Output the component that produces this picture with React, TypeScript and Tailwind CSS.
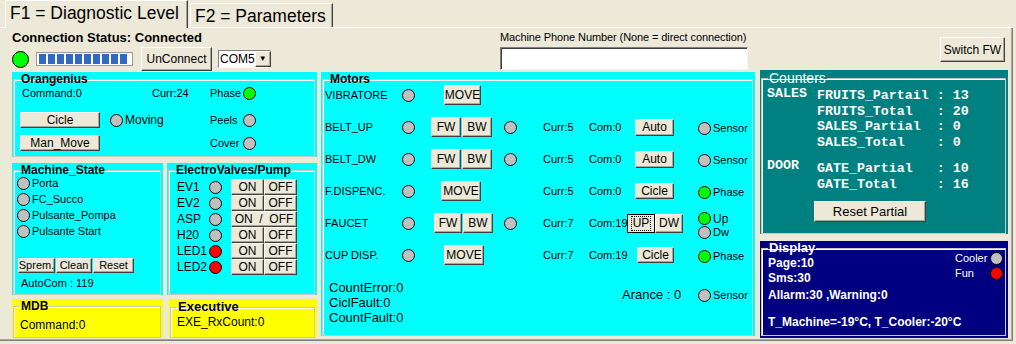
import type { ReactNode } from 'react';

type LedColor = 'gray' | 'green' | 'red';

const ledBg: Record<LedColor, string> = {
  gray: 'bg-[#c0c0c0]',
  green: 'bg-[#00ff00]',
  red: 'bg-[#ff0000]',
};

function Led({ color = 'gray', className = '' }: { color?: LedColor; className?: string }) {
  return (
    <span
      className={`block w-[13px] h-[13px] shrink-0 rounded-full border border-black ${ledBg[color]} ${className}`}
    />
  );
}

function Btn({ children, className = '' }: { children: ReactNode; className?: string }) {
  return (
    <button
      type="button"
      className={`flex items-center justify-center shrink-0 whitespace-nowrap bg-[#ece9d8] border border-t-white border-l-white border-r-[#404040] border-b-[#404040] shadow-[inset_-1px_-1px_0_#aca899] text-black leading-none ${className}`}
    >
      {children}
    </button>
  );
}

function Group({
  title,
  className = '',
  legendClass = '',
  boxClass = '',
  children,
}: {
  title: string;
  className?: string;
  legendClass?: string;
  boxClass?: string;
  children: ReactNode;
}) {
  return (
    <div className={className}>
      <fieldset
        className={`h-full ml-[1px] mr-[2px] border border-[#c8c8c0] shadow-[inset_1px_1px_0_#ffffff] ${boxClass}`}
      >
        <legend className={`ml-[6px] px-[1px] font-bold text-[12px] leading-[14px] ${legendClass}`}>
          {title}
        </legend>
        {children}
      </fieldset>
    </div>
  );
}

// riga motore: etichetta, led, pulsanti, led2, Curr, Com, pulsante, stato
function MotorRow({
  label,
  mid,
  led2 = false,
  curr,
  right,
}: {
  label: string;
  mid: ReactNode;
  led2?: boolean;
  curr?: string;
  right?: ReactNode;
}) {
  return (
    <div className="flex items-center h-[20px]">
      <span className="w-[77px] shrink-0">{label}</span>
      <Led />
      <div className="w-[89px] h-full flex shrink-0">{mid}</div>
      {led2 ? <Led /> : <span className="w-[13px] shrink-0" />}
      {curr && <span className="ml-[26px] w-[46px] shrink-0">{curr}</span>}
      {right}
    </div>
  );
}

function Status({ color = 'gray', text }: { color?: LedColor; text: string }) {
  return (
    <div className="flex items-center gap-[2px] mt-[3px]">
      <Led color={color} />
      <span>{text}</span>
    </div>
  );
}

export default function App() {
  const valves: [string, LedColor, boolean][] = [
    ['EV1', 'gray', false],
    ['EV2', 'gray', false],
    ['ASP', 'gray', true],
    ['H20', 'gray', false],
    ['LED1', 'red', false],
    ['LED2', 'red', false],
  ];

  const counters = [
    'FRUITS_Partail : 13',
    'FRUITS_Total   : 20',
    'SALES_Partial  : 0',
    'SALES_Total    : 0',
  ];

  return (
    <div className="w-[1016px] h-[344px] bg-[#ece9d8] text-black font-['Liberation_Sans',Arial,sans-serif] text-[11px] overflow-hidden">
      {/* Tabs */}
      <div className="h-[28px] flex items-end pl-[5px] border-b border-white w-[1013px]">
        <div className="relative z-10 w-[183px] h-[28px] mb-[-1px] bg-[#ece9d8] border-l border-t border-white border-r border-r-[#404040] shadow-[inset_-1px_0_0_#aca899] pl-[4px] text-[17.5px] leading-[24px] whitespace-nowrap">
          F1 = Diagnostic Level
        </div>
        <div className="w-[143px] h-[24px] ml-[2px] border-l border-t border-white border-r border-r-[#404040] shadow-[inset_-1px_0_0_#aca899] pl-[4px] text-[17.5px] leading-[24px] whitespace-nowrap">
          F2 = Parameters
        </div>
      </div>

      <div className="w-[1013px] h-[313px] border-r border-b border-[#808080] shadow-[inset_-1px_-1px_0_#aca899]">
        {/* Header */}
        <div className="h-[42px] flex pl-[12px]">
          <div className="w-[259px] shrink-0 pt-[3px]">
            <div className="text-[13px] font-bold leading-[14px]">Connection Status: Connected</div>
            <div className="flex items-center mt-[2px] h-[24px]">
              <span className="block w-[17px] h-[17px] rounded-full border border-black bg-[#00ff00]" />
              <div className="ml-[7px] w-[97px] h-[14px] border border-[#9a9a9a] bg-white flex gap-[2px] pl-[2px] py-[1px]">
                {Array.from({ length: 10 }).map((_, i) => (
                  <span key={i} className="block w-[7px] h-full bg-[#316ac5]" />
                ))}
              </div>
              <Btn className="ml-[8px] w-[71px] h-[24px] text-[12px]">UnConnect</Btn>
              <div className="ml-[6px] w-[53px] h-[18px] flex bg-white border border-t-[#808080] border-l-[#808080] border-r-white border-b-white">
                <span className="flex-1 text-[12px] leading-[16px] pl-[1px]">COM5</span>
                <Btn className="w-[16px] h-full text-[8px]">▼</Btn>
              </div>
            </div>
          </div>
          <div className="ml-[229px] w-[248px] shrink-0 pt-[2px]">
            <div className="leading-[14px] whitespace-nowrap tracking-[-0.1px]">
              Machine Phone Number (None = direct connection)
            </div>
            <div className="mt-[3px] h-[23px] bg-white border border-t-[#808080] border-l-[#808080] border-r-[#f4f4f4] border-b-[#f4f4f4] shadow-[inset_1px_1px_0_#404040]" />
          </div>
          <Btn className="ml-[192px] mt-[9px] w-[65px] h-[25px] text-[12px]">Switch FW</Btn>
        </div>

        {/* Panels */}
        <div className="flex pl-[12px]">
          {/* Left column */}
          <div className="w-[305px] mt-[2px] shrink-0">
            <Group title="Orangenius" className="h-[85px] bg-[#00ffff]">
              <div className="pl-[6px]">
                <div className="flex items-center h-[16px] mt-[-1px]">
                  <span className="w-[132px] pl-[2px]">Command:0</span>
                  <span className="w-[58px]">Curr:24</span>
                  <span className="w-[33px]">Phase</span>
                  <Led color="green" />
                </div>
                <div className="flex items-center h-[16px] mt-[11px]">
                  <div className="w-[190px] flex items-center">
                    <Btn className="w-[80px] h-[16px] text-[12px]">Cicle</Btn>
                    <Led className="ml-[10px]" />
                    <span className="ml-[2px] text-[12px]">Moving</span>
                  </div>
                  <span className="w-[33px]">Peels</span>
                  <Led />
                </div>
                <div className="flex items-center h-[16px] mt-[7px]">
                  <div className="w-[190px] flex items-center">
                    <Btn className="w-[80px] h-[16px] text-[12px]">Man_Move</Btn>
                  </div>
                  <span className="w-[33px]">Cover</span>
                  <Led />
                </div>
              </div>
            </Group>

            <div className="flex mt-[6px]">
              <Group title="Machine_State" className="w-[151px] h-[132px] bg-[#00ffff] shrink-0">
                <div className="pl-[3px] mt-[-2px]">
                  {['Porta', 'FC_Succo', 'Pulsante_Pompa', 'Pulsante Start'].map((s) => (
                    <div key={s} className="flex items-center h-[16px] gap-[2px]">
                      <Led />
                      <span>{s}</span>
                    </div>
                  ))}
                  <div className="flex mt-[19px] pl-[1px] gap-[1px]">
                    <Btn className="w-[37px] h-[15px] text-[11px]">Sprem.</Btn>
                    <Btn className="w-[36px] h-[15px] text-[11px]">Clean</Btn>
                    <Btn className="w-[41px] h-[15px] text-[11px]">Reset</Btn>
                  </div>
                  <div className="mt-[3px] pl-[4px] leading-[14px]">AutoCom : 119</div>
                </div>
              </Group>
              <Group title="ElectroValves/Pump" className="ml-[4px] w-[150px] h-[132px] bg-[#00ffff] shrink-0">
                <div className="pl-[8px] mt-[2px]">
                  {valves.map(([name, c, joined]) => (
                    <div key={name} className="flex items-center h-[16px]">
                      <span className="w-[32px] text-[12px]">{name}</span>
                      <Led color={c} />
                      {joined ? (
                        <Btn className="ml-[9px] w-[66px] h-[16px] text-[12px]">ON&nbsp;&nbsp;/&nbsp;&nbsp;OFF</Btn>
                      ) : (
                        <>
                          <Btn className="ml-[9px] w-[33px] h-[16px] text-[12px]">ON</Btn>
                          <Btn className="w-[33px] h-[16px] text-[12px]">OFF</Btn>
                        </>
                      )}
                    </div>
                  ))}
                </div>
              </Group>
            </div>

            <div className="flex mt-[4px]">
              <Group title="MDB" className="w-[151px] h-[39px] bg-[#ffff00] shrink-0">
                <div className="pl-[6px] mt-[5px] text-[12px] leading-[14px]">Command:0</div>
              </Group>
              <Group
                title="Executive"
                className="ml-[6px] w-[148px] h-[39px] bg-[#ffff00] shrink-0"
                legendClass="text-[13px] leading-[16px]"
              >
                <div className="pl-[6px] text-[12px] leading-[14px]">EXE_RxCount:0</div>
              </Group>
            </div>
          </div>

          {/* Motors */}
          <Group title="Motors" className="ml-[4px] mt-[2px] w-[434px] h-[264px] bg-[#00ffff] shrink-0">
            <div className="pl-[2px] mt-[-1px] flex flex-col gap-[12px]">
              <MotorRow
                label="VIBRATORE"
                mid={<Btn className="ml-[29px] w-[37px] h-[20px] text-[12px]">MOVE</Btn>}
              />
              {['BELT_UP', 'BELT_DW'].map((l) => (
                <MotorRow
                  key={l}
                  label={l}
                  led2
                  curr="Curr:5"
                  mid={
                    <div className="ml-[16px] flex gap-[1px]">
                      <Btn className="w-[30px] h-[20px] text-[12px]">FW</Btn>
                      <Btn className="w-[30px] h-[20px] text-[12px]">BW</Btn>
                    </div>
                  }
                  right={
                    <>
                      <span className="w-[46px] shrink-0">Com:0</span>
                      <div className="w-[63px] shrink-0">
                        <Btn className="w-[39px] h-[17px] text-[12px]">Auto</Btn>
                      </div>
                      <Status text="Sensor" />
                    </>
                  }
                />
              ))}
              <MotorRow
                label="F.DISPENC."
                curr="Curr:5"
                mid={<Btn className="ml-[26px] w-[40px] h-[20px] text-[12px]">MOVE</Btn>}
                right={
                  <>
                    <span className="w-[46px] shrink-0">Com:0</span>
                    <div className="w-[63px] shrink-0">
                      <Btn className="w-[39px] h-[16px] text-[12px]">Cicle</Btn>
                    </div>
                    <Status color="green" text="Phase" />
                  </>
                }
              />
              <MotorRow
                label="FAUCET"
                led2
                curr="Curr:7"
                mid={
                  <div className="ml-[19px] flex gap-[1px]">
                    <Btn className="w-[28px] h-[20px] text-[12px]">FW</Btn>
                    <Btn className="w-[30px] h-[20px] text-[12px]">BW</Btn>
                  </div>
                }
                right={
                  <>
                    <span className="w-[38px] shrink-0">Com:19</span>
                    <button
                      type="button"
                      className="w-[28px] h-[19px] flex items-center justify-center bg-[#ece9d8] border border-black shrink-0"
                    >
                      <span className="text-[12px] leading-[13px] px-[1px] outline outline-1 outline-dotted outline-black">
                        UP
                      </span>
                    </button>
                    <Btn className="w-[28px] h-[19px] text-[12px]">DW</Btn>
                    <div className="ml-[15px] pt-[5px] flex flex-col gap-[1px]">
                      <div className="flex items-center gap-[2px] h-[12px]">
                        <Led color="green" />
                        <span className="text-[12px]">Up</span>
                      </div>
                      <div className="flex items-center gap-[2px] h-[13px]">
                        <Led />
                        <span>Dw</span>
                      </div>
                    </div>
                  </>
                }
              />
              <MotorRow
                label="CUP DISP."
                curr="Curr:7"
                mid={<Btn className="ml-[29px] w-[40px] h-[20px] text-[12px]">MOVE</Btn>}
                right={
                  <>
                    <span className="w-[46px] shrink-0">Com:19</span>
                    <div className="w-[63px] shrink-0">
                      <Btn className="ml-[2px] w-[37px] h-[16px] text-[12px]">Cicle</Btn>
                    </div>
                    <Status color="green" text="Phase" />
                  </>
                }
              />
            </div>
            <div className="flex mt-[15px]">
              <div className="pl-[6px] w-[299px] text-[13px] leading-[15px]">
                <div>CountError:0</div>
                <div>CiclFault:0</div>
                <div>CountFault:0</div>
              </div>
              <div className="mt-[8px] flex items-center h-[14px]">
                <span className="w-[76px] text-[13px]">Arance : 0</span>
                <Led />
                <span className="ml-[2px]">Sensor</span>
              </div>
            </div>
          </Group>

          {/* Right column */}
          <div className="ml-[5px] w-[248px] shrink-0">
            <Group
              title="Counters"
              className="h-[164px] bg-[#008080] text-white"
              legendClass="font-normal text-[14px] leading-[16px]"
            >
              <div className="pl-[5px] mt-[2px] font-['Liberation_Mono','Courier_New',monospace] font-bold text-[13.3px] leading-[15.5px]">
                <div className="flex">
                  <span className="w-[50px] -mt-[2px]">SALES</span>
                  <div className="whitespace-pre">
                    {counters.map((c) => (
                      <div key={c}>{c}</div>
                    ))}
                  </div>
                </div>
                <div className="flex mt-[11px]">
                  <span className="w-[50px] -mt-[3px]">DOOR</span>
                  <div className="whitespace-pre">
                    <div>GATE_Partial   : 10</div>
                    <div>GATE_Total     : 16</div>
                  </div>
                </div>
              </div>
              <Btn className="ml-[52px] mt-[9px] w-[112px] h-[21px] text-[13px] font-['Liberation_Sans',Arial,sans-serif]">
                Reset Partial
              </Btn>
            </Group>

            <Group
              title="Display"
              className="mt-[7px] h-[97px] bg-[#000080] text-white"
              boxClass="!h-[95px]"
              legendClass="text-[13px] leading-[14px]"
            >
              <div className="flex pl-[6px] mt-[1px]">
                <div className="font-bold text-[12px] leading-[15px]">
                  <div>Page:10</div>
                  <div>Sms:30</div>
                </div>
                <div className="ml-auto mr-[2px] -mt-[5px] leading-[15px]">
                  <div className="flex items-center h-[15px]">
                    <span className="w-[35px]">Cooler</span>
                    <Led />
                  </div>
                  <div className="flex items-center h-[15px]">
                    <span className="w-[35px]">Fun</span>
                    <Led color="red" />
                  </div>
                </div>
              </div>
              <div className="pl-[6px] mt-[2px] font-bold text-[12px] leading-[15px]">Allarm:30 ,Warning:0</div>
              <div className="pl-[6px] mt-[12px] font-bold text-[12px] leading-[15px]">
                T_Machine=-19°C, T_Cooler:-20°C
              </div>
            </Group>
          </div>
        </div>
      </div>
    </div>
  );
}
